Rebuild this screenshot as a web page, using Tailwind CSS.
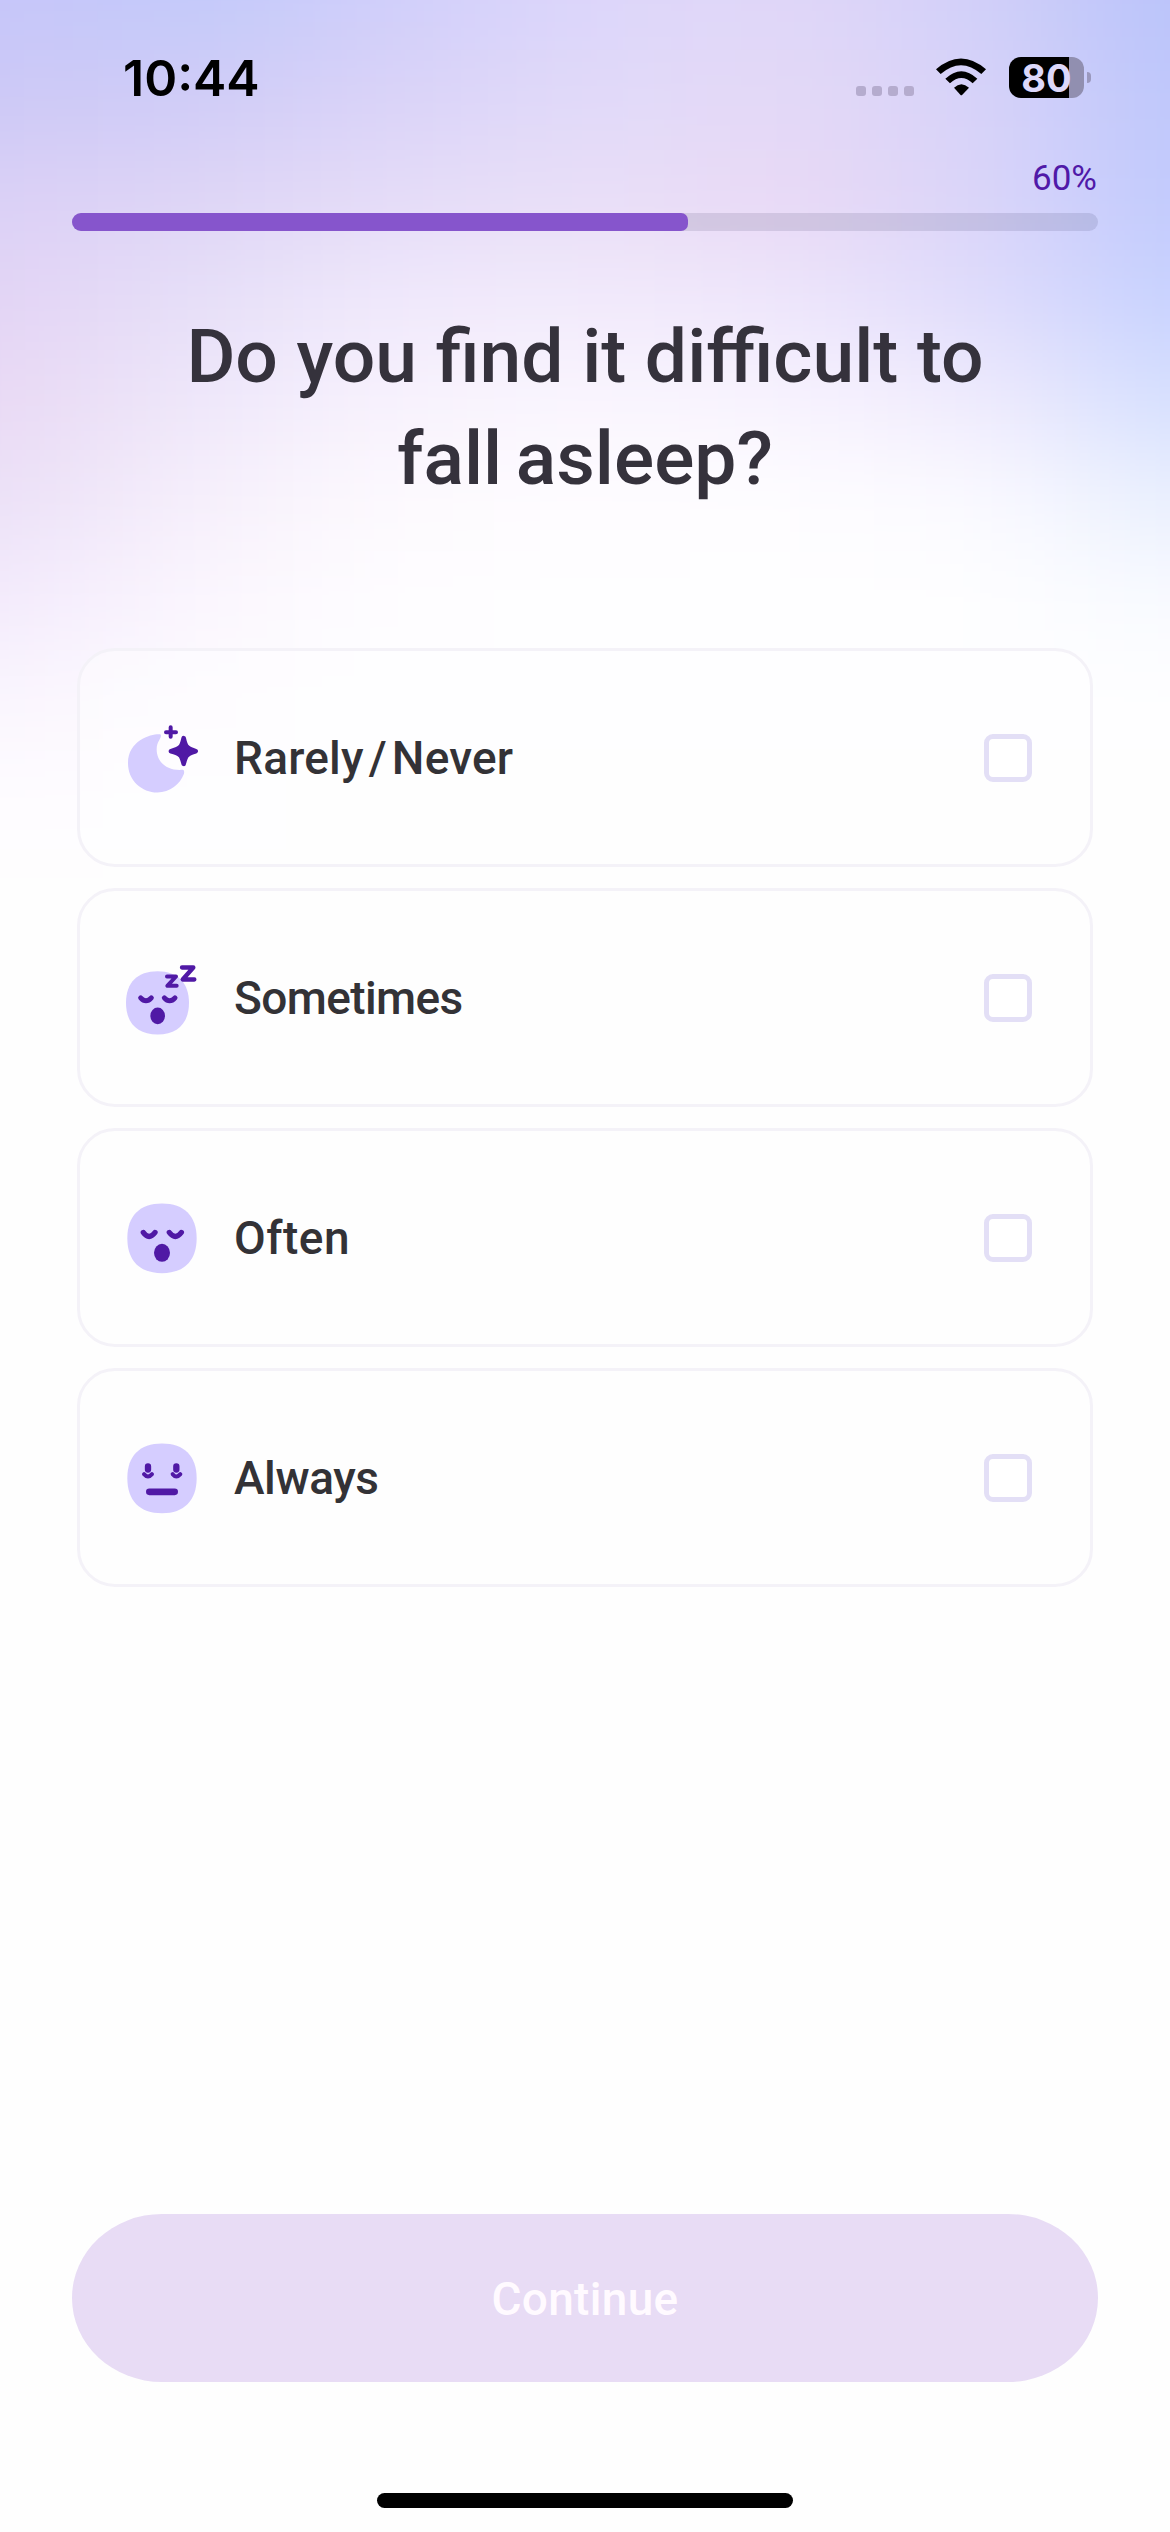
<!DOCTYPE html>
<html lang="en">
<head>
<meta charset="utf-8">
<title>Sleep quiz</title>
<script src="https://cdn.jsdelivr.net/npm/@tailwindcss/browser@4"></script>
</head>
<body class="bg-[#fefefe]">
<div class="relative flex h-[2532px] w-[1170px] flex-col overflow-hidden">
  <!-- soft mesh gradient -->
  <svg class="absolute left-0 top-0 -z-10 h-[1000px] w-[1170px]" viewBox="0 0 1170 1000">
    <defs><filter id="soft" filterUnits="userSpaceOnUse" x="-400" y="-300" width="1970" height="1500" color-interpolation-filters="sRGB"><feGaussianBlur stdDeviation="80 42"/></filter></defs>
    <g id="mesh" filter="url(#soft)"></g>
  </svg>

  <!-- status bar -->
  <header class="flex h-[156px] items-start justify-between pl-[123px] pr-[79px]">
    <div class="mt-[48px] font-['Inter'] text-[50px] font-semibold leading-[60px] text-black">10:44</div>
    <div class="mt-[57px] flex h-[41px] items-start">
      <div class="mt-[29px] flex gap-[6px]">
        <i class="size-[10px] rounded-[3px] bg-[#b5acce]"></i><i class="size-[10px] rounded-[3px] bg-[#b5acce]"></i><i class="size-[10px] rounded-[3px] bg-[#b5acce]"></i><i class="size-[10px] rounded-[3px] bg-[#b5acce]"></i>
      </div>
      <svg class="ml-[22px] mt-[1px] h-[39px] w-[50px]" viewBox="0 0 150 117">
        <path d="M0 34 Q75-31 150 34 L136 48 Q75-5 14 48Z"/>
        <path d="M28 62 Q76 17 124 62 L110 76 Q76 44 42 76Z"/>
        <path d="M54 89 Q76 68 99 89 L79 110 Q76 113 73 110Z"/>
      </svg>
      <div class="ml-[23px] flex h-[41px] w-[75px] items-center justify-center rounded-[12px] bg-[linear-gradient(to_right,#000_60px,#918fb0_60px)]">
        <span class="font-['Inter'] text-[38px] font-bold leading-none text-[#dcd8fa]">80</span>
      </div>
      <i class="ml-[3px] mt-[15px] h-[11px] w-[4px] rounded-r-full bg-[#9a98bd]"></i>
    </div>
  </header>

  <!-- progress -->
  <section class="flex flex-col px-[72px]">
    <div class="flex h-[57px] justify-end pr-[1px] pt-px"><span class="font-['Roboto'] text-[35px] leading-[44px] text-[#5019a8]">60%</span></div>
    <div class="h-[18px] w-full overflow-hidden rounded-full bg-[#14143c]/11">
      <div class="h-full rounded-r-[7px] bg-[#8655cc]" style="width:60%"></div>
    </div>
  </section>

  <h1 class="mt-[74px] text-center font-['Roboto'] text-[75px] font-medium leading-[102px] text-[#35323c]"><span>Do you find it difficult to</span><br><span class="[word-spacing:-5px]">fall asleep?</span></h1>

  <!-- answers -->
  <main class="mt-[139px] flex flex-col gap-[21px] px-[77px] font-['Roboto'] text-[46px] font-medium text-[#333236]">
    <label class="flex h-[219px] items-center rounded-[38px] border-3 border-[#f4f2f8] bg-white/40 pl-[30px] pr-[58px]">
      <svg class="h-[100px] w-[110px] shrink-0" viewBox="0 -7.5 330 300">
        <path fill="#d5cdff" d="M152 72C135 68 54 84 54 158C54 210 96 246 142 246C180 246 210 222 222 190Q224 178 218 178C170 182 140 154 140 116C140 92 157 82 152 72Z"/>
        <g fill="#5019a5" stroke="#5019a5" stroke-linejoin="round" stroke-linecap="round">
          <path stroke-width="12" d="M182 50V79M168 65H198"/>
          <path stroke-width="14" d="M221 83Q226 106 233 111Q239 117 257 122Q239 127 233 133Q226 138 221 160Q216 138 209 133Q203 127 183 122Q203 117 209 111Q216 106 221 83Z"/>
        </g>
      </svg>
      <span class="ml-[14px] mt-[2px] tracking-[0.2px]">Rarely<span class="mx-[5px]">/</span>Never</span>
      <i class="ml-auto size-[48px] rounded-[9px] border-5 border-[#e3dff6] bg-white"></i>
    </label>
    <label class="flex h-[219px] items-center rounded-[38px] border-3 border-[#f4f2f8] bg-white/40 pl-[30px] pr-[58px]">
      <svg class="h-[100px] w-[110px] shrink-0" viewBox="0 -7.5 330 300">
        <path fill="#d5cdff" d="M143 62C204 62 237 98 237 157S204 252 143 252S48 218 48 157S82 62 143 62Z"/>
        <g fill="none" stroke="#5019a5" stroke-linejoin="round" stroke-linecap="round">
          <path stroke-width="15" d="M92 142Q108 160 124 142M163 142Q179 160 195 142"/>
          <path stroke-width="12" d="M171 78H198L172 106H200"/>
          <path stroke-width="13" d="M216 51H250L218 87H253"/>
        </g>
        <ellipse cx="143" cy="196" rx="22" ry="25" fill="#5019a5"/>
      </svg>
      <span class="ml-[14px] mt-[2px] tracking-[-0.6px]">Sometimes</span>
      <i class="ml-auto size-[48px] rounded-[9px] border-5 border-[#e3dff6] bg-white"></i>
    </label>
    <label class="flex h-[219px] items-center rounded-[38px] border-3 border-[#f4f2f8] bg-white/40 pl-[30px] pr-[58px]">
      <svg class="h-[100px] w-[110px] shrink-0" viewBox="0 -7.5 330 300">
        <path fill="#d5cdff" d="M156 39C223 39 260 77 260 143S223 248 156 248S52 210 52 143S89 39 156 39Z"/>
        <path fill="none" stroke="#5019a5" stroke-width="16" stroke-linecap="round" d="M100 126Q117 150 135 126M178 126Q196 150 214 126"/>
        <ellipse cx="156" cy="187" rx="24" ry="27" fill="#5019a5"/>
      </svg>
      <span class="ml-[14px] mt-[2px] tracking-[0.5px]">Often</span>
      <i class="ml-auto size-[48px] rounded-[9px] border-5 border-[#e3dff6] bg-white"></i>
    </label>
    <label class="flex h-[219px] items-center rounded-[38px] border-3 border-[#f4f2f8] bg-white/40 pl-[30px] pr-[58px]">
      <svg class="h-[100px] w-[110px] shrink-0" viewBox="0 -7.5 330 300">
        <path fill="#d5cdff" d="M156 39C223 39 260 77 260 143S223 248 156 248S52 210 52 143S89 39 156 39Z"/>
        <g fill="none" stroke="#5019a5" stroke-linecap="round">
          <path stroke-width="19" d="M114 108V117M199 108V117"/>
          <path stroke-width="12" d="M102 131Q114 145 126 131M188 131Q199 145 211 131"/>
          <path stroke-width="20" d="M118 184H194"/>
        </g>
      </svg>
      <span class="ml-[14px] mt-[2px] tracking-[-0.4px]">Always</span>
      <i class="ml-auto size-[48px] rounded-[9px] border-5 border-[#e3dff6] bg-white"></i>
    </label>
  </main>

  <footer class="mt-auto flex flex-col items-center px-[72px] pb-[24px]">
    <button class="flex h-[168px] w-full items-center justify-center rounded-[90px/84px] bg-[#e8dcf5] pt-[2px] font-['Roboto'] text-[46px] font-medium tracking-[0.3px] text-[#fffaff]"><span>Continue</span></button>
    <div class="mt-[111px] h-[15px] w-[416px] rounded-full bg-black"></div>
  </footer>
</div>
<script>
const rows = [
  'c7c6fa c2cafa d0cefa dcd6fa e1d7f8 d2d0f9 b9c3fa',
  'cdc9f6 d0ccf7 dad3f8 e1dafa e4d9f6 d8d3f9 bec7fb',
  'dbd0f6 ded5f6 e5dcf8 e9dff7 ead9f5 dbd5f9 c1cafd',
  'e3d4f5 e6dff8 f0e9fb f2eafb eee6fb e0dcfb c7d2ff',
  'e9d9f4 eee7fa f8f2fd faf6fe f8f3fe f0ebfd d5dffe',
  'ebe0f7 f6effb fdfafe fefcff fefdff fbfaff e9effe',
  'f3eafc fbf6fe fefdff fefeff fefeff fefeff f8faff',
  'faf5fe fdfbff fefeff fefeff fefeff fefeff fefeff',
  'fefcff fefdff fefefe fefefe fefefe fefefe fefefe'
].map(r => r.split(' '));
const mesh = document.getElementById('mesh');
for (let r = -2; r < 12; r++) for (let c = -2; c < 9; c++) {
  const row = rows[Math.max(0, r)];
  const cell = document.createElementNS('http://www.w3.org/2000/svg', 'rect');
  cell.setAttribute('x', c * 195 - 98);
  cell.setAttribute('y', r * 100 - 50);
  cell.setAttribute('width', 196);
  cell.setAttribute('height', 101);
  cell.setAttribute('fill', row ? '#' + row[Math.min(6, Math.max(0, c))] : '#fefefe');
  mesh.appendChild(cell);
}
</script>
</body>
</html>
